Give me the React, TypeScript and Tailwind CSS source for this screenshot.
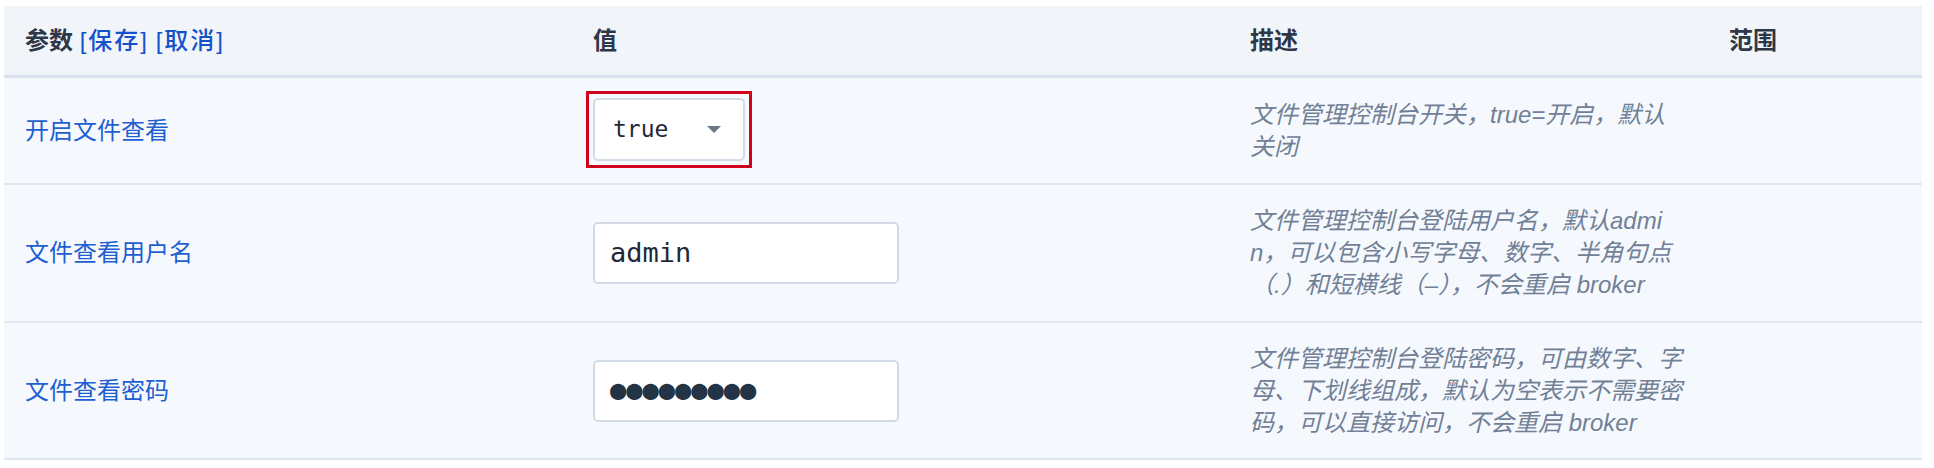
import React from "react";

const cjk = '"Liberation Sans", "Noto Sans CJK SC", sans-serif';
const mono = '"DejaVu Sans Mono", "Liberation Mono", monospace';

function Desc({ lines }: { lines: string[] }) {
  return (
    <div
      className="text-[24px] leading-[32px] italic text-[#718096]"
      style={{ fontFamily: cjk }}
    >
      {lines.map((l, i) => (
        <div key={i} className="whitespace-nowrap">
          {l}
        </div>
      ))}
    </div>
  );
}

function Label({ text }: { text: string }) {
  return (
    <div className="text-[24px] text-[#1f5fd1]" style={{ fontFamily: cjk }}>
      {text}
    </div>
  );
}

const cols = "grid grid-cols-[568px_657px_479px_214px]";

export default function App() {
  return (
    <div className="w-[1934px] h-[468px] bg-white pt-[6px] pl-[4px]">
      <div className="w-[1918px]">
        {/* header */}
        <div
          className={`${cols} h-[72px] bg-[#f1f5f9] border-b-[3px] border-[#d9e2ec] items-center text-[24px] font-semibold text-[#2d3748]`}
          style={{ fontFamily: cjk }}
        >
          <div className="pl-[21px]">
            参数{" "}
            <span className="text-[#1552c9] font-medium tracking-[2px]">[保存]</span>{" "}
            <span className="text-[#1552c9] font-medium tracking-[2px]">[取消]</span>
          </div>
          <div className="pl-[21px]">值</div>
          <div className="pl-[21px]">描述</div>
          <div className="pl-[21px]">范围</div>
        </div>

        {/* row 1 */}
        <div
          className={`${cols} h-[107px] bg-[#f5f9fd] border-b-2 border-[#dfe7ef] items-center`}
        >
          <div className="pl-[21px]">
            <Label text="开启文件查看" />
          </div>
          <div className="pl-[21px]">
            <div className="inline-block -ml-[7px] -mt-[2px] border-[3px] border-[#d0021b] p-[4px]">
              <div className="w-[152px] h-[63px] bg-white border-2 border-[#d2dbe5] rounded-[5px] flex items-center justify-between pl-[18px] pr-[22px]">
                <span
                  className="text-[23px] text-[#1f2937]"
                  style={{ fontFamily: mono }}
                >
                  true
                </span>
                <svg width="14" height="7" viewBox="0 0 14 7">
                  <path d="M0 0 L14 0 L7 7 Z" fill="#6b7785" />
                </svg>
              </div>
            </div>
          </div>
          <div className="pl-[21px]">
            <Desc lines={["文件管理控制台开关，true=开启，默认", "关闭"]} />
          </div>
          <div />
        </div>

        {/* row 2 */}
        <div
          className={`${cols} h-[138px] bg-[#f5f9fd] border-b-2 border-[#dfe7ef] items-center`}
        >
          <div className="pl-[21px]">
            <Label text="文件查看用户名" />
          </div>
          <div className="pl-[21px]">
            <div className="w-[306px] h-[62px] bg-white border-2 border-[#d2dbe5] rounded-[5px] flex items-center pl-[15px]">
              <span
                className="text-[27px] text-[#1f2937]"
                style={{ fontFamily: mono }}
              >
                admin
              </span>
            </div>
          </div>
          <div className="pl-[21px]">
            <Desc
              lines={[
                "文件管理控制台登陆用户名，默认admi",
                "n，可以包含小写字母、数字、半角句点",
                "（.）和短横线（–），不会重启 broker",
              ]}
            />
          </div>
          <div />
        </div>

        {/* row 3 */}
        <div
          className={`${cols} h-[137px] bg-[#f5f9fd] border-b-2 border-[#dfe7ef] items-center`}
        >
          <div className="pl-[21px]">
            <Label text="文件查看密码" />
          </div>
          <div className="pl-[21px]">
            <div className="w-[306px] h-[62px] bg-white border-2 border-[#d2dbe5] rounded-[5px] flex items-center pl-[15px]">
              <span
                className="text-[27px] text-[#243447]"
                style={{ fontFamily: mono }}
              >
                ●●●●●●●●●
              </span>
            </div>
          </div>
          <div className="pl-[21px]">
            <Desc
              lines={[
                "文件管理控制台登陆密码，可由数字、字",
                "母、下划线组成，默认为空表示不需要密",
                "码，可以直接访问，不会重启 broker",
              ]}
            />
          </div>
          <div />
        </div>
      </div>
    </div>
  );
}
